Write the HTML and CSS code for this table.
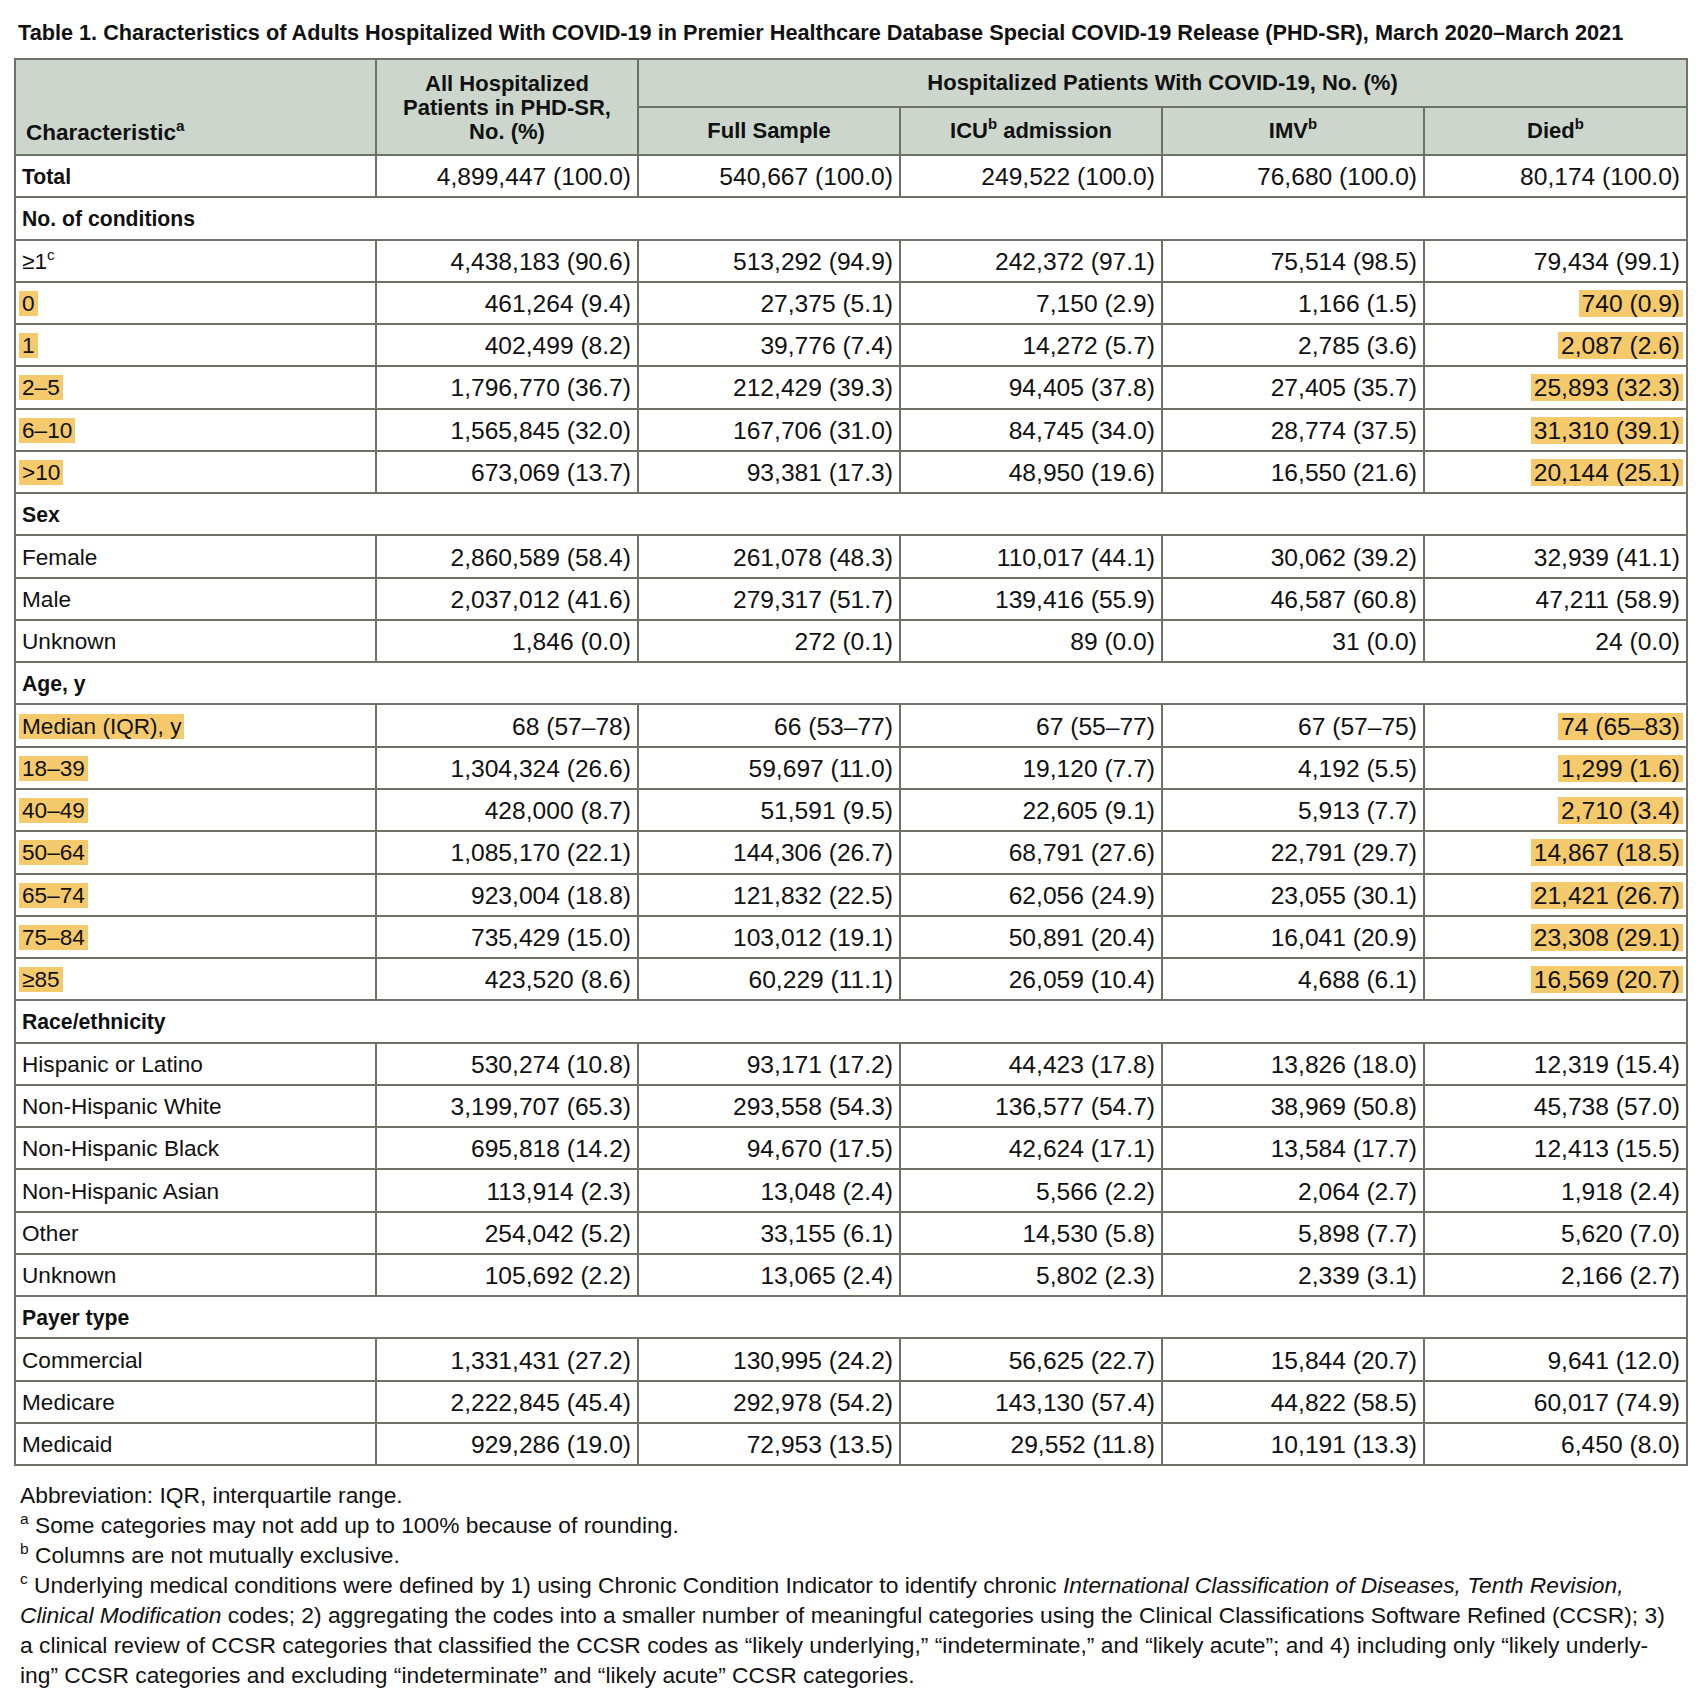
FILE: index.html
```html
<!DOCTYPE html>
<html lang="en">
<head>
<meta charset="utf-8">
<title>Table 1</title>
<link rel="stylesheet" href="styles.css">
</head>
<body>
<div class="page">
  <h1 class="title">Table 1. Characteristics of Adults Hospitalized With COVID-19 in Premier Healthcare Database Special COVID-19 Release (PHD-SR), March 2020–March 2021</h1>
  <table class="data">
    <colgroup>
      <col class="c0"><col class="cn"><col class="cn"><col class="cn"><col class="cn"><col class="cl">
    </colgroup>
    <thead>
      <tr class="h1">
        <th rowspan="2" class="hchar">Characteristic<sup>a</sup></th>
        <th rowspan="2" class="hall">All Hospitalized<br>Patients in PHD-SR,<br>No. (%)</th>
        <th colspan="4" class="hgroup">Hospitalized Patients With COVID-19, No. (%)</th>
      </tr>
      <tr class="h2">
        <th>Full Sample</th>
        <th>ICU<sup>b</sup> admission</th>
        <th>IMV<sup>b</sup></th>
        <th>Died<sup>b</sup></th>
      </tr>
    </thead>
    <tbody>
      <tr><td class="lab b">Total</td><td>4,899,447 (100.0)</td><td>540,667 (100.0)</td><td>249,522 (100.0)</td><td>76,680 (100.0)</td><td>80,174 (100.0)</td></tr>
      <tr class="sec"><td colspan="6">No. of conditions</td></tr>
      <tr><td class="lab">≥1<sup>c</sup></td><td>4,438,183 (90.6)</td><td>513,292 (94.9)</td><td>242,372 (97.1)</td><td>75,514 (98.5)</td><td>79,434 (99.1)</td></tr>
      <tr><td class="lab"><span class="hl">0</span></td><td>461,264 (9.4)</td><td>27,375 (5.1)</td><td>7,150 (2.9)</td><td>1,166 (1.5)</td><td><span class="hl">740 (0.9)</span></td></tr>
      <tr><td class="lab"><span class="hl">1</span></td><td>402,499 (8.2)</td><td>39,776 (7.4)</td><td>14,272 (5.7)</td><td>2,785 (3.6)</td><td><span class="hl">2,087 (2.6)</span></td></tr>
      <tr><td class="lab"><span class="hl">2–5</span></td><td>1,796,770 (36.7)</td><td>212,429 (39.3)</td><td>94,405 (37.8)</td><td>27,405 (35.7)</td><td><span class="hl">25,893 (32.3)</span></td></tr>
      <tr><td class="lab"><span class="hl">6–10</span></td><td>1,565,845 (32.0)</td><td>167,706 (31.0)</td><td>84,745 (34.0)</td><td>28,774 (37.5)</td><td><span class="hl">31,310 (39.1)</span></td></tr>
      <tr><td class="lab"><span class="hl">&gt;10</span></td><td>673,069 (13.7)</td><td>93,381 (17.3)</td><td>48,950 (19.6)</td><td>16,550 (21.6)</td><td><span class="hl">20,144 (25.1)</span></td></tr>
      <tr class="sec"><td colspan="6">Sex</td></tr>
      <tr><td class="lab">Female</td><td>2,860,589 (58.4)</td><td>261,078 (48.3)</td><td>110,017 (44.1)</td><td>30,062 (39.2)</td><td>32,939 (41.1)</td></tr>
      <tr><td class="lab">Male</td><td>2,037,012 (41.6)</td><td>279,317 (51.7)</td><td>139,416 (55.9)</td><td>46,587 (60.8)</td><td>47,211 (58.9)</td></tr>
      <tr><td class="lab">Unknown</td><td>1,846 (0.0)</td><td>272 (0.1)</td><td>89 (0.0)</td><td>31 (0.0)</td><td>24 (0.0)</td></tr>
      <tr class="sec"><td colspan="6">Age, y</td></tr>
      <tr><td class="lab"><span class="hl">Median (IQR), y</span></td><td>68 (57–78)</td><td>66 (53–77)</td><td>67 (55–77)</td><td>67 (57–75)</td><td><span class="hl">74 (65–83)</span></td></tr>
      <tr><td class="lab"><span class="hl">18–39</span></td><td>1,304,324 (26.6)</td><td>59,697 (11.0)</td><td>19,120 (7.7)</td><td>4,192 (5.5)</td><td><span class="hl">1,299 (1.6)</span></td></tr>
      <tr><td class="lab"><span class="hl">40–49</span></td><td>428,000 (8.7)</td><td>51,591 (9.5)</td><td>22,605 (9.1)</td><td>5,913 (7.7)</td><td><span class="hl">2,710 (3.4)</span></td></tr>
      <tr><td class="lab"><span class="hl">50–64</span></td><td>1,085,170 (22.1)</td><td>144,306 (26.7)</td><td>68,791 (27.6)</td><td>22,791 (29.7)</td><td><span class="hl">14,867 (18.5)</span></td></tr>
      <tr><td class="lab"><span class="hl">65–74</span></td><td>923,004 (18.8)</td><td>121,832 (22.5)</td><td>62,056 (24.9)</td><td>23,055 (30.1)</td><td><span class="hl">21,421 (26.7)</span></td></tr>
      <tr><td class="lab"><span class="hl">75–84</span></td><td>735,429 (15.0)</td><td>103,012 (19.1)</td><td>50,891 (20.4)</td><td>16,041 (20.9)</td><td><span class="hl">23,308 (29.1)</span></td></tr>
      <tr><td class="lab"><span class="hl">≥85</span></td><td>423,520 (8.6)</td><td>60,229 (11.1)</td><td>26,059 (10.4)</td><td>4,688 (6.1)</td><td><span class="hl">16,569 (20.7)</span></td></tr>
      <tr class="sec"><td colspan="6">Race/ethnicity</td></tr>
      <tr><td class="lab">Hispanic or Latino</td><td>530,274 (10.8)</td><td>93,171 (17.2)</td><td>44,423 (17.8)</td><td>13,826 (18.0)</td><td>12,319 (15.4)</td></tr>
      <tr><td class="lab">Non-Hispanic White</td><td>3,199,707 (65.3)</td><td>293,558 (54.3)</td><td>136,577 (54.7)</td><td>38,969 (50.8)</td><td>45,738 (57.0)</td></tr>
      <tr><td class="lab">Non-Hispanic Black</td><td>695,818 (14.2)</td><td>94,670 (17.5)</td><td>42,624 (17.1)</td><td>13,584 (17.7)</td><td>12,413 (15.5)</td></tr>
      <tr><td class="lab">Non-Hispanic Asian</td><td>113,914 (2.3)</td><td>13,048 (2.4)</td><td>5,566 (2.2)</td><td>2,064 (2.7)</td><td>1,918 (2.4)</td></tr>
      <tr><td class="lab">Other</td><td>254,042 (5.2)</td><td>33,155 (6.1)</td><td>14,530 (5.8)</td><td>5,898 (7.7)</td><td>5,620 (7.0)</td></tr>
      <tr><td class="lab">Unknown</td><td>105,692 (2.2)</td><td>13,065 (2.4)</td><td>5,802 (2.3)</td><td>2,339 (3.1)</td><td>2,166 (2.7)</td></tr>
      <tr class="sec"><td colspan="6">Payer type</td></tr>
      <tr><td class="lab">Commercial</td><td>1,331,431 (27.2)</td><td>130,995 (24.2)</td><td>56,625 (22.7)</td><td>15,844 (20.7)</td><td>9,641 (12.0)</td></tr>
      <tr><td class="lab">Medicare</td><td>2,222,845 (45.4)</td><td>292,978 (54.2)</td><td>143,130 (57.4)</td><td>44,822 (58.5)</td><td>60,017 (74.9)</td></tr>
      <tr><td class="lab">Medicaid</td><td>929,286 (19.0)</td><td>72,953 (13.5)</td><td>29,552 (11.8)</td><td>10,191 (13.3)</td><td>6,450 (8.0)</td></tr>
    </tbody>
  </table>
  <div class="notes">
    <p class="line">Abbreviation: IQR, interquartile range.</p>
    <p class="line"><sup>a</sup> Some categories may not add up to 100% because of rounding.</p>
    <p class="line"><sup>b</sup> Columns are not mutually exclusive.</p>
    <p class="line"><sup>c</sup> Underlying medical conditions were defined by 1) using Chronic Condition Indicator to identify chronic <i>International Classification of Diseases, Tenth Revision,</i></p>
    <p class="line"><i>Clinical Modification</i> codes; 2) aggregating the codes into a smaller number of meaningful categories using the Clinical Classifications Software Refined (CCSR); 3)</p>
    <p class="line">a clinical review of CCSR categories that classified the CCSR codes as “likely underlying,” “indeterminate,” and “likely acute”; and 4) including only “likely underly-</p>
    <p class="line">ing” CCSR categories and excluding “indeterminate” and “likely acute” CCSR categories.</p>
  </div>
</div>
</body>
</html>
```

FILE: styles.css
```css
html, body {
  margin: 0;
  padding: 0;
  background: #ffffff;
}
body {
  font-family: "Liberation Sans", Arial, sans-serif;
  color: #111111;
}
.page {
  padding: 0 16px 0 14px;
}
.title {
  margin: 0;
  padding: 20px 0 0 4px;
  height: 58px;
  box-sizing: border-box;
  font-size: 21.7px;
  font-weight: bold;
  line-height: 26px;
  white-space: nowrap;
}
.data {
  width: 1672px;
  table-layout: fixed;
  border-collapse: collapse;
  border: 2px solid #6f7066;
}
.c0 { width: 361px; }
.cn { width: 262px; }
.cl { width: 263px; }
.data th, .data td {
  border: 2px solid #6f7066;
  padding: 0 6px;
}
.data th {
  background: #cdd6cc;
  font-size: 22px;
  font-weight: bold;
  line-height: 24px;
  text-align: center;
}
.h1 { height: 48px; }
.h2 { height: 48px; }
.data th.hchar {
  text-align: left;
  vertical-align: bottom;
  padding: 0 6px 9px 10px;
  font-size: 22.5px;
}
.data th.hall {
  padding-top: 2px;
}
.data td {
  font-size: 24.6px;
  line-height: 26px;
  text-align: right;
  height: 38.27px;
  padding-top: 2px;
  padding-bottom: 0;
}
.data td.lab {
  text-align: left;
  font-size: 22.6px;
}
.data td.b {
  font-weight: bold;
  font-size: 21.2px;
}
.sec td {
  text-align: left;
  font-weight: bold;
  font-size: 21.2px;
}
sup {
  font-size: 0.68em;
  line-height: 0;
  vertical-align: 0.6em;
}
.hl {
  background: #f5ca6c;
  padding: 0 3px;
  margin: 0 -3px;
}
.notes {
  padding: 14px 0 0 6px;
}
.line {
  margin: 0;
  font-size: 22.8px;
  line-height: 30px;
  white-space: nowrap;
}
```
